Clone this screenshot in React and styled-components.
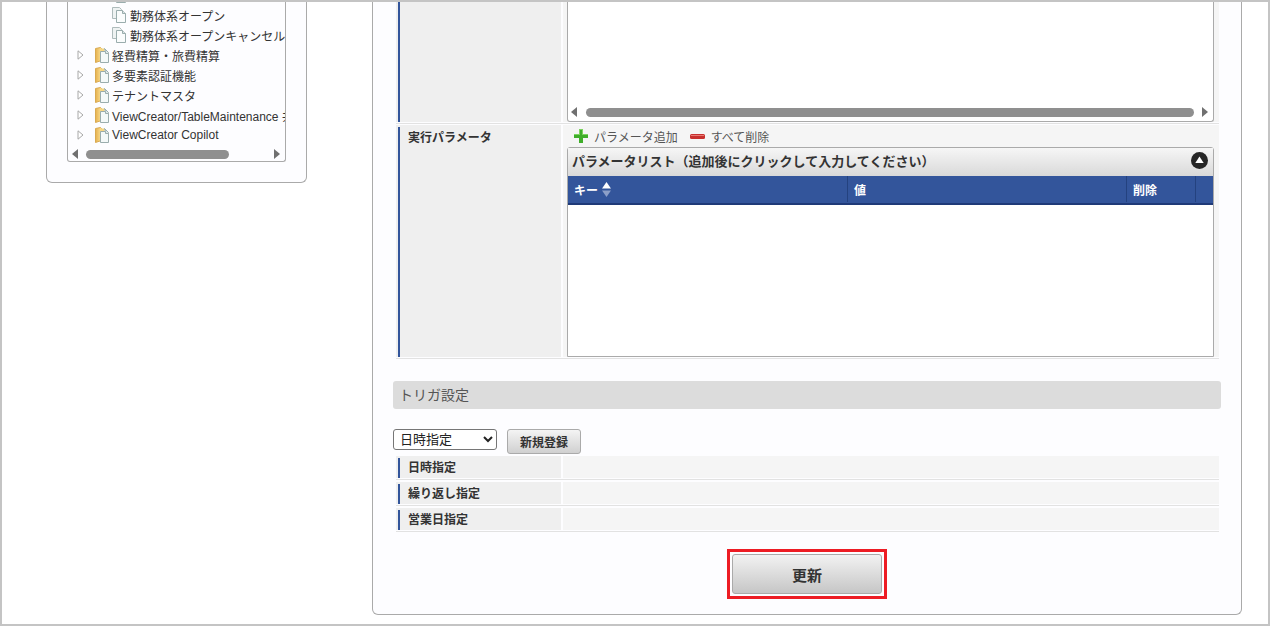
import styled, { createGlobalStyle } from "styled-components";

const GlobalStyle = createGlobalStyle`
  html, body {
    margin: 0;
    padding: 0;
    background: #fff;
  }
  body {
    font-family: "Liberation Sans", "Noto Sans CJK JP", sans-serif;
    font-size: 12px;
    color: #333;
  }
`;

const folders = [
  "経費精算・旅費精算",
  "多要素認証機能",
  "テナントマスタ",
  "ViewCreator/TableMaintenance 共通",
  "ViewCreator Copilot",
];

const pages = ["", "勤務体系オープン", "勤務体系オープンキャンセル"];

const triggers = ["日時指定", "繰り返し指定", "営業日指定"];

const PageIcon = () => (
  <svg width="16" height="16" viewBox="0 0 16 16">
    <path d="M.5 .5h7l2 2v9h-9z" fill="#eef2f2" stroke="#aebbbb" />
    <path d="M4.500 3.500h6l3 3v9h-9z" fill="#fafcfc" stroke="#9aadad" />
    <path d="M10.500 3.500v3h3" fill="#d9e3e3" stroke="#9aadad" />
  </svg>
);

const FolderIcon = () => (
  <svg width="16" height="16" viewBox="0 0 16 16">
    <defs>
      <linearGradient id="folderFill" x1="0" x2="1" y1="0" y2="0">
        <stop offset="0" stopColor="#e6b04c" />
        <stop offset="1" stopColor="#fbe39a" />
      </linearGradient>
    </defs>
    <path d="M.5 1.500l5-1 1 1v12l-6 2z" fill="url(#folderFill)" stroke="#d9aa52" />
    <path d="M5.500 1.500h4v3h-4z" fill="#f6d681" />
    <path d="M5.500 4.500h5l3 2v9h-8z" fill="#f4f9f9" stroke="#9aadad" />
    <path d="M9.500 1.500l4 4v1h-3v-2z" fill="#dce8e8" stroke="#9aadad" />
  </svg>
);

const TreeArrow = () => (
  <svg width="7" height="10" viewBox="0 0 7 10">
    <path d="M1 .8v8.400L6 5z" fill="#fff" stroke="#a8a8a8" />
  </svg>
);

const ScrollArrow = ({ right }) => (
  <svg width="6" height="10" viewBox="0 0 6 10">
    <path d={right ? "M0 0l6 5-6 5z" : "M6 0L0 5l6 5z"} fill="#707070" />
  </svg>
);

const SortIcon = () => (
  <svg width="9" height="15" viewBox="0 0 9 15">
    <path d="M4.500 0L9 6.500H0z" fill="#fff" />
    <path d="M4.500 15L0 8.500h9z" fill="#8c9fc8" />
  </svg>
);

const PlusIcon = () => (
  <svg width="14" height="14" viewBox="0 0 14 14">
    <path d="M5 0h4v5h5v4H9v5H5V9H0V5h5z" fill="#3fae2a" />
    <path d="M5 0h4v5h5v1H8V1H6v5H0V5h5z" fill="#7cd35f" />
  </svg>
);

const MinusIcon = () => (
  <svg width="15" height="5" viewBox="0 0 15 5">
    <rect width="15" height="5" rx="1.500" fill="#c8302e" />
    <rect x="1" y="1" width="13" height="1" fill="#e87a74" />
  </svg>
);

const CollapseIcon = () => (
  <svg width="17" height="17" viewBox="0 0 17 17">
    <circle cx="8.500" cy="8.500" r="8.500" fill="#262626" />
    <path d="M8.500 4.500l4.200 6.500H4.300z" fill="#fff" />
  </svg>
);

const Scrollbar = ({ thumbLeft, thumbWidth }) => (
  <ScrollTrack>
    <ScrollArrow />
    <ScrollLane $left={thumbLeft}>
      <ScrollThumb style={{ width: thumbWidth }} />
    </ScrollLane>
    <ScrollArrow right />
  </ScrollTrack>
);

const App = () => (
  <>
    <GlobalStyle />
    <Frame>
      <SidePanel>
        <Tree>
          <TreeList>
            {pages.map((label, i) => (
              <PageRow key={i}>
                <PageIcon />
                <span>{label}</span>
              </PageRow>
            ))}
            {folders.map((label) => (
              <FolderRow key={label}>
                <TreeArrow />
                <FolderIcon />
                <span>{label}</span>
              </FolderRow>
            ))}
          </TreeList>
          <TreeScroll>
            <Scrollbar thumbLeft={8} thumbWidth={143} />
          </TreeScroll>
        </Tree>
      </SidePanel>

      <MainPanel>
        <FormTable>
          <FormRow>
            <Th>
              <ThLabel $flush />
            </Th>
            <Td>
              <ScrollBox>
                <ScrollBoxBar>
                  <Scrollbar thumbLeft={9} thumbWidth={608} />
                </ScrollBoxBar>
              </ScrollBox>
            </Td>
          </FormRow>
          <FormRow>
            <Th>
              <ThLabel>実行パラメータ</ThLabel>
            </Th>
            <Td>
              <Actions>
                <Action>
                  <PlusIcon />
                  パラメータ追加
                </Action>
                <Action>
                  <MinusIcon />
                  すべて削除
                </Action>
              </Actions>
              <ListBox>
                <ListTitle>
                  パラメータリスト（追加後にクリックして入力してください）
                  <CollapseIcon />
                </ListTitle>
                <ListHead>
                  <HeadCell $width={280}>
                    キー
                    <SortIcon />
                  </HeadCell>
                  <HeadCell $width={279}>値</HeadCell>
                  <HeadCell $width={69}>削除</HeadCell>
                  <HeadCell $last />
                </ListHead>
                <ListBody />
              </ListBox>
            </Td>
          </FormRow>
        </FormTable>

        <SectionHead>トリガ設定</SectionHead>

        <TriggerBar>
          <TriggerSelect defaultValue="date">
            <option value="date">日時指定</option>
            <option value="repeat">繰り返し指定</option>
            <option value="business">営業日指定</option>
          </TriggerSelect>
          <SmallButton>新規登録</SmallButton>
        </TriggerBar>

        <TriggerTable>
          {triggers.map((label) => (
            <TriggerRow key={label}>
              <Th>
                <ThLabel>{label}</ThLabel>
              </Th>
              <Td />
            </TriggerRow>
          ))}
        </TriggerTable>

        <Submit>
          <Highlight>
            <UpdateButton>更新</UpdateButton>
          </Highlight>
        </Submit>
      </MainPanel>
    </Frame>
  </>
);

const Frame = styled.div`
  box-sizing: border-box;
  width: 1270px;
  height: 626px;
  border: 2px solid #c4c4c4;
  display: flex;
  align-items: flex-start;
  overflow: hidden;
  background: #fff;
`;

const SidePanel = styled.aside`
  box-sizing: border-box;
  width: 261px;
  margin-left: 44px;
  padding: 0 20px 20px;
  border: 1px solid #aaa;
  border-top: none;
  border-radius: 0 0 6px 6px;
  background: #fdfdff;
`;

const Tree = styled.div`
  box-sizing: border-box;
  width: 219px;
  height: 160px;
  border: 1px solid #aaa;
  border-top: none;
  border-radius: 0 0 3px 3px;
  overflow: hidden;
  display: flex;
  flex-direction: column;
`;

const TreeList = styled.ul`
  list-style: none;
  margin: -17px 0 0;
  padding: 0;
  flex: none;
  height: 163px;
  overflow: hidden;
  white-space: nowrap;
`;

const PageRow = styled.li`
  display: flex;
  align-items: center;
  gap: 2px;
  height: 20px;
  padding-left: 44px;
  color: #333;

  svg {
    flex: none;
  }
`;

const FolderRow = styled.li`
  display: flex;
  align-items: center;
  height: 20px;
  padding-left: 9px;
  color: #333;

  svg {
    flex: none;
  }
  svg:first-child {
    margin-right: 11px;
  }
  svg:nth-child(2) {
    margin-right: 1px;
  }
`;

const TreeScroll = styled.div`
  padding: 1px 5px 0 4px;
`;

const ScrollTrack = styled.div`
  display: flex;
  align-items: center;
  height: 10px;
`;

const ScrollLane = styled.div`
  flex: 1;
  padding-left: ${(p) => p.$left}px;
`;

const ScrollThumb = styled.div`
  height: 9px;
  border-radius: 5px;
  background: #8f8f8f;
`;

const MainPanel = styled.main`
  box-sizing: border-box;
  width: 870px;
  margin-left: 65px;
  padding: 0 20px 15px;
  border: 1px solid #aaa;
  border-top: none;
  border-radius: 0 0 6px 6px;
  background: #fdfdff;
`;

const FormTable = styled.div`
  margin: 0 2px 0 3px;
`;

const FormRow = styled.div`
  display: grid;
  grid-template-columns: 165px 1fr;
  column-gap: 2px;
  padding-bottom: 1px;
  border-bottom: 1px solid #e2e2e2;
  margin-bottom: 1px;
`;

const Th = styled.div`
  display: flex;
  background: #efefef;
`;

const ThLabel = styled.div`
  flex: 1;
  margin: ${(p) => (p.$flush ? "0" : "2px")} 0 0 2px;
  padding: 4px 0 0 8px;
  border-left: 2px solid #33559b;
  font-weight: 700;
  line-height: 15px;
  color: #333;
`;

const Td = styled.div`
  box-sizing: border-box;
  background: #f5f5f5;
  padding: 0 5px 0 4px;
  min-width: 0;
`;

const ScrollBox = styled.div`
  box-sizing: border-box;
  height: 120px;
  border: 1px solid #aaa;
  border-top: none;
  border-radius: 0 0 3px 3px;
  background: #fff;
  display: flex;
  flex-direction: column;
  justify-content: flex-end;
`;

const ScrollBoxBar = styled.div`
  padding: 0 5px 4px 3px;
`;

const Actions = styled.div`
  display: flex;
  align-items: center;
  gap: 12px;
  height: 22px;
  padding-left: 7px;
`;

const Action = styled.span`
  display: flex;
  align-items: center;
  gap: 6px;
  color: #555;
`;

const ListBox = styled.div`
  box-sizing: border-box;
  width: 647px;
  border: 1px solid #aaa;
  border-radius: 3px 3px 0 0;
  background: #fff;
`;

const ListTitle = styled.div`
  box-sizing: border-box;
  display: flex;
  align-items: center;
  justify-content: space-between;
  height: 28px;
  padding: 0 5px 4px 4px;
  font-weight: 700;
  font-size: 13px;
  color: #333;
  background: linear-gradient(#f6f6f6, #d9d9d9);
`;

const ListHead = styled.div`
  box-sizing: border-box;
  display: flex;
  height: 29px;
  padding-bottom: 1px;
  background: #33559b;
  border-bottom: 2px solid #1f3a78;
`;

const HeadCell = styled.div`
  box-sizing: border-box;
  display: flex;
  align-items: center;
  gap: 4px;
  width: ${(p) => (p.$width ? `${p.$width}px` : "auto")};
  flex: ${(p) => (p.$last ? 1 : "none")};
  padding-left: 6px;
  border-right: ${(p) => (p.$last ? "none" : "1px solid #24427f")};
  font-weight: 700;
  color: #fff;
`;

const ListBody = styled.div`
  height: 151px;
`;

const SectionHead = styled.h2`
  box-sizing: border-box;
  height: 28px;
  margin: 22px 0 0;
  padding-left: 6px;
  border-radius: 3px;
  background: #dcdcdc;
  font-size: 14px;
  font-weight: 400;
  line-height: 28px;
  color: #555;
`;

const TriggerBar = styled.div`
  display: flex;
  align-items: flex-start;
  gap: 10px;
  margin-top: 20px;
`;

const TriggerSelect = styled.select`
  box-sizing: border-box;
  width: 104px;
  height: 21px;
  padding: 0 0 0 2px;
  border: 1px solid #767676;
  border-radius: 3px;
  background: #fff;
  font-family: inherit;
  font-size: 13px;
  color: #222;
`;

const SmallButton = styled.button`
  box-sizing: border-box;
  width: 74px;
  height: 25px;
  padding: 0;
  border: 1px solid #aaa;
  border-radius: 3px;
  background: linear-gradient(#f4f4f4, #d0d0d0);
  font-family: inherit;
  font-size: 12px;
  font-weight: 700;
  color: #333;
`;

const TriggerTable = styled.div`
  margin: 2px 2px 0 3px;
`;

const TriggerRow = styled.div`
  display: grid;
  grid-template-columns: 165px 1fr;
  column-gap: 2px;
  height: 22px;
  padding-bottom: 1px;
  border-bottom: 1px solid #e2e2e2;
  margin-bottom: 2px;

  ${ThLabel} {
    padding-top: 3px;
  }
`;

const Submit = styled.div`
  display: flex;
  justify-content: center;
  margin-top: 17px;
`;

const Highlight = styled.div`
  padding: 2px;
  border: 3px solid #ed1c24;
`;

const UpdateButton = styled.button`
  box-sizing: border-box;
  display: block;
  width: 150px;
  height: 40px;
  padding: 0;
  border: 1px solid #aaa;
  border-radius: 3px;
  background: linear-gradient(#f2f2f2, #c6c6c6);
  font-family: inherit;
  font-size: 15px;
  font-weight: 700;
  color: #333;
`;

export default App;
